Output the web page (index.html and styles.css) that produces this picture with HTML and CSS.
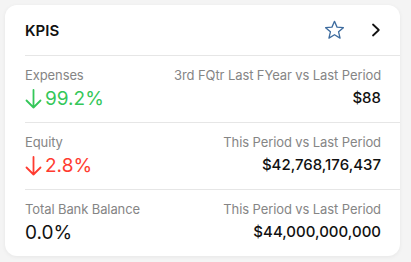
FILE: index.html
```html
<html>
    <head>
        <title>KPIs</title>
        <link rel="stylesheet" href="styles.css">
    </head>
    <body>
        <div class="card">
            <div class="header">
                <span class="title">KPIS</span>
                <svg class="star" width="21" height="20" viewBox="0 0 24 23">
                    <path d="M12 1.5 L14.9 8.2 L22.2 8.8 L16.7 13.6 L18.4 20.8 L12 17 L5.6 20.8 L7.3 13.6 L1.8 8.8 L9.1 8.2 Z" fill="none" stroke="#3d6b9e" stroke-width="1.5" stroke-linejoin="round"/>
                </svg>
                <svg class="chevron" width="10" height="14" viewBox="0 0 10 14">
                    <path d="M2 1.5 L7.8 7 L2 12.5" fill="none" stroke="#111" stroke-width="1.8" stroke-linecap="round" stroke-linejoin="round"/>
                </svg>
            </div>
            <div class="row">
                <div class="left">
                    <div class="label">Expenses</div>
                    <div class="pct green">
                        <svg width="17" height="20" viewBox="0 0 17 20"><path d="M8.5 1 V18.5 M1.5 11.5 L8.5 18.5 L15.5 11.5" fill="none" stroke="currentColor" stroke-width="1.8" stroke-linecap="round" stroke-linejoin="round"/></svg>
                        99.2%
                    </div>
                </div>
                <div class="right">
                    <div class="label">3rd FQtr Last FYear vs Last Period</div>
                    <div class="amount">$88</div>
                </div>
            </div>
            <div class="row">
                <div class="left">
                    <div class="label">Equity</div>
                    <div class="pct red">
                        <svg width="17" height="20" viewBox="0 0 17 20"><path d="M8.5 1 V18.5 M1.5 11.5 L8.5 18.5 L15.5 11.5" fill="none" stroke="currentColor" stroke-width="1.8" stroke-linecap="round" stroke-linejoin="round"/></svg>
                        2.8%
                    </div>
                </div>
                <div class="right">
                    <div class="label">This Period vs Last Period</div>
                    <div class="amount">$42,768,176,437</div>
                </div>
            </div>
            <div class="row last">
                <div class="left">
                    <div class="label">Total Bank Balance</div>
                    <div class="pct">0.0%</div>
                </div>
                <div class="right">
                    <div class="label">This Period vs Last Period</div>
                    <div class="amount">$44,000,000,000</div>
                </div>
            </div>
        </div>
    </body>
</html>
```
FILE: styles.css
```css
body {
    margin: 0;
    padding: 5px 11px 9px 5px;
    background-color: #f4f4f4;
    font-family: Inter, "Noto Sans", sans-serif;
    color: #111;
}

.card {
    background-color: #fff;
    border-radius: 12px;
    padding-left: 20px;
    box-shadow: 0 1px 4px rgba(0, 0, 0, 0.06);
}

.header {
    height: 50px;
    display: flex;
    align-items: center;
    padding-right: 19px;
    border-bottom: 1px solid #e6e6e6;
}

.title {
    font-size: 15px;
    font-weight: 600;
    flex: 1;
}

.star {
    margin-right: 26px;
}

.row {
    display: flex;
    justify-content: space-between;
    padding: 10px 19px 9px 0;
    border-bottom: 1px solid #e6e6e6;
}

.row.last {
    border-bottom: none;
}

.label {
    font-size: 13px;
    line-height: 18px;
    color: #858585;
    letter-spacing: -0.1px;
}

.pct {
    font-size: 19px;
    line-height: 28px;
    margin-top: 1px;
    display: flex;
    align-items: center;
    gap: 3px;
}

.green {
    color: #34c759;
}

.red {
    color: #ff3b30;
}

.right {
    text-align: right;
}

.amount {
    font-size: 15px;
    font-weight: 500;
    line-height: 22px;
    margin-top: 3px;
}
```
